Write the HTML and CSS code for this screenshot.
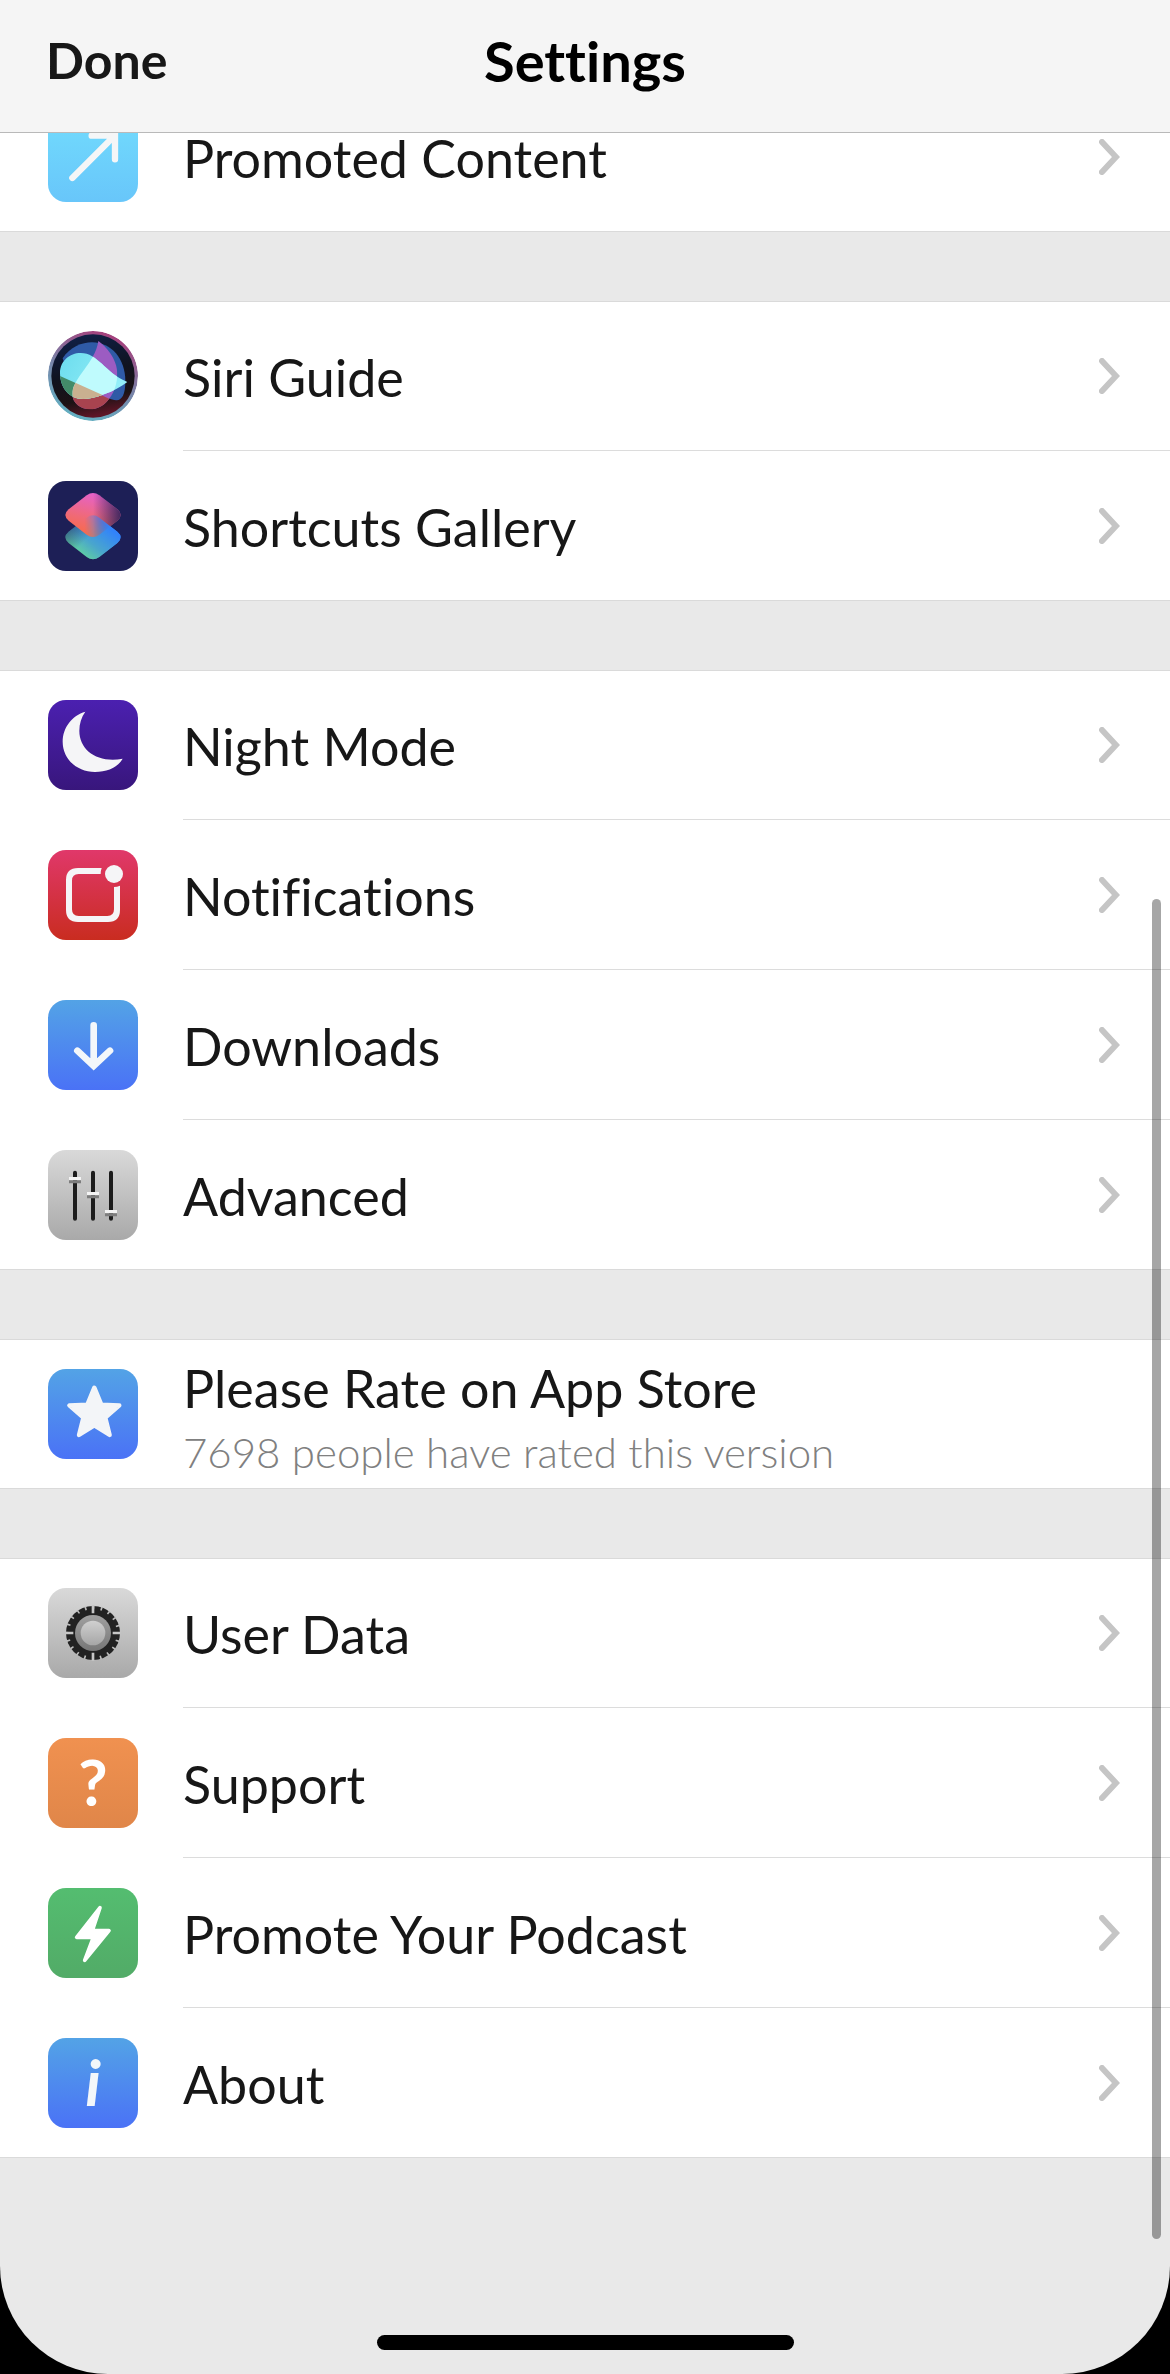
FILE: index.html
```html
<!DOCTYPE html>
<html lang="en">
<head>
    <meta charset="UTF-8">
    <meta name="viewport" content="width=device-width, initial-scale=1.0">
    <title>Settings</title>
    <link rel="stylesheet" href="styles.css">
</head>
<body>
    <!-- Shared chevron -->
    <svg class="defs" width="0" height="0" aria-hidden="true">
        <symbol id="chevron" viewBox="0 0 21 36">
            <path d="M3 3 L17 18 L3 33" fill="none" stroke="#c5c5c5" stroke-width="6" stroke-linecap="round"/>
        </symbol>
    </svg>

    <div class="screen">
        <header class="navbar">
            <button type="button" class="done">Done</button>
            <h1>Settings</h1>
        </header>

        <main class="settings">
            <ul class="group">
                <li><a class="row" href="#promoted">
                    <svg class="icon sky" viewBox="0 0 270 270"><path d="M73 198 L198 73 M131 71 H201 V142" fill="none" stroke="#f5f6f7" stroke-width="19" stroke-linecap="round"/></svg>
                    <span class="label">Promoted Content</span>
                    <svg class="chevron"><use href="#chevron"/></svg>
                </a></li>
            </ul>

            <ul class="group">
                <li><a class="row" href="#siri">
                    <svg class="icon round" viewBox="0 0 270 270">
                        <defs>
                            <linearGradient id="siriRim" x1="0.7" y1="0" x2="0.3" y2="1">
                                <stop offset="0" stop-color="#a83a78"/>
                                <stop offset="0.5" stop-color="#7a83a8"/>
                                <stop offset="1" stop-color="#62b3c4"/>
                            </linearGradient>
                            <linearGradient id="siriBack" x1="0.2" y1="0" x2="0.4" y2="1">
                                <stop offset="0" stop-color="#102048"/>
                                <stop offset="0.5" stop-color="#10131f"/>
                                <stop offset="0.8" stop-color="#1c1214"/>
                                <stop offset="1" stop-color="#5c1526"/>
                            </linearGradient>
                            <linearGradient id="siriCyan" x1="0" y1="0" x2="1" y2="0.6">
                                <stop offset="0" stop-color="#5fd6ea"/>
                                <stop offset="1" stop-color="#9df3fb"/>
                            </linearGradient>
                            <clipPath id="petalTall"><path d="M151 30 C142 96 73 140 73 190 C73 217 100 235 126 235 C175 235 208 180 208 128 C208 84 172 44 151 30 Z"/></clipPath>
                            <clipPath id="petalWide"><path d="M36 126 C36 90 65 66 98 66 C150 66 170 124 238 153 C200 182 140 204 105 204 C62 204 36 168 36 126 Z"/></clipPath>
                        </defs>
                        <circle cx="135" cy="135" r="135" fill="url(#siriRim)"/>
                        <circle cx="135" cy="135" r="125" fill="url(#siriBack)"/>
                        <path d="M44 82 C66 48 102 34 132 34 C190 34 232 84 232 150 C232 192 222 206 206 208 C180 210 60 150 44 82 Z" fill="#2f5aa6"/>
                        <g clip-path="url(#petalTall)">
                            <rect width="270" height="270" fill="#9c5cc2"/>
                            <path d="M36 134 L80 155 L190 206 L220 260 H36 Z" fill="#a8434f"/>
                        </g>
                        <g clip-path="url(#petalWide)">
                            <rect width="270" height="270" fill="url(#siriCyan)"/>
                            <path d="M30 132 L190 204 V230 H30 Z" fill="#438b69"/>
                            <g clip-path="url(#petalTall)">
                                <rect width="270" height="270" fill="#bffbfd"/>
                                <path d="M30 132 L190 204 V230 H30 Z" fill="#c9b090"/>
                            </g>
                        </g>
                    </svg>
                    <span class="label">Siri Guide</span>
                    <svg class="chevron"><use href="#chevron"/></svg>
                </a></li>
                <li><a class="row" href="#shortcuts">
                    <svg class="icon navy" viewBox="0 0 270 270">
                        <defs>
                            <linearGradient id="tileLow" x1="0.2" y1="0.9" x2="0.8" y2="0.3">
                                <stop offset="0" stop-color="#64d69a"/>
                                <stop offset="0.45" stop-color="#4aa6cd"/>
                                <stop offset="1" stop-color="#3283fa"/>
                            </linearGradient>
                            <linearGradient id="tileTop" x1="0.6" y1="0" x2="0.3" y2="1">
                                <stop offset="0" stop-color="#e561cf"/>
                                <stop offset="0.6" stop-color="#f06a74"/>
                                <stop offset="1" stop-color="#fa6a42"/>
                            </linearGradient>
                            <linearGradient id="fadeRight">
                                <stop offset="0.5" stop-color="#302158" stop-opacity="0"/>
                                <stop offset="1" stop-color="#302158" stop-opacity="0.9"/>
                            </linearGradient>
                            <linearGradient id="fadeLeft" x1="0" y1="0" x2="0.5" y2="0.4">
                                <stop offset="0" stop-color="#1f1f56" stop-opacity="0.8"/>
                                <stop offset="1" stop-color="#1f1f56" stop-opacity="0"/>
                            </linearGradient>
                            <linearGradient id="blend" gradientUnits="userSpaceOnUse" x1="110" y1="150" x2="185" y2="150">
                                <stop offset="0" stop-color="#000"/>
                                <stop offset="1" stop-color="#fff"/>
                            </linearGradient>
                            <mask id="rightHalf"><rect width="270" height="270" fill="url(#blend)"/></mask>
                            <path id="tile" d="M116 43 Q135 29 154 43 L208 85 Q228 102 208 119 L154 161 Q135 175 116 161 L62 119 Q42 102 62 85 Z"/>
                        </defs>
                        <use href="#tile" y="67" fill="url(#tileLow)"/>
                        <use href="#tile" y="67" fill="url(#fadeLeft)"/>
                        <use href="#tile" fill="url(#tileTop)"/>
                        <use href="#tile" fill="url(#fadeRight)"/>
                        <g mask="url(#rightHalf)"><use href="#tile" y="67" fill="url(#tileLow)"/></g>
                    </svg>
                    <span class="label">Shortcuts Gallery</span>
                    <svg class="chevron"><use href="#chevron"/></svg>
                </a></li>
            </ul>

            <ul class="group">
                <li><a class="row" href="#night">
                    <svg class="icon purple" viewBox="0 0 270 270"><path d="M112 35 C72 46 44 83 44 125 C44 176 86 216 141 216 C178 216 210 202 224 176 C150 190 94 152 94 92 C94 70 100 52 112 35 Z" fill="#f5f5f7"/></svg>
                    <span class="label">Night Mode</span>
                    <svg class="chevron"><use href="#chevron"/></svg>
                </a></li>
                <li><a class="row" href="#notifications">
                    <svg class="icon red" viewBox="0 0 270 270">
                        <path d="M161 54 H90 Q54 54 54 90 V180 Q54 216 90 216 H180 Q216 216 216 180 V107 Q207 111 198 111 V178 Q198 198 178 198 H92 Q72 198 72 178 V92 Q72 72 92 72 H158 Q158 62 161 54 Z" fill="#f5f5f7"/>
                        <circle cx="198" cy="72" r="27" fill="#f5f5f7"/>
                    </svg>
                    <span class="label">Notifications</span>
                    <svg class="chevron"><use href="#chevron"/></svg>
                </a></li>
                <li><a class="row" href="#downloads">
                    <svg class="icon blue" viewBox="0 0 270 270"><path d="M137 76 V194 M88 152 L137 198 L186 152" fill="none" stroke="#f3f7fa" stroke-width="20" stroke-linecap="round"/></svg>
                    <span class="label">Downloads</span>
                    <svg class="chevron"><use href="#chevron"/></svg>
                </a></li>
                <li><a class="row" href="#advanced">
                    <svg class="icon grey" viewBox="0 0 270 270">
                        <path d="M81 68 V206 M135 68 V206 M189 68 V206" stroke="#1c1c1c" stroke-width="12" stroke-linecap="round"/>
                        <path d="M63 86 H99 M117 131 H153 M171 185 H207" stroke="#f4f4f4" stroke-width="10"/>
                        <path d="M63 95 H99 M117 140 H153 M171 194 H207" stroke="#7d7d7d" stroke-width="9"/>
                    </svg>
                    <span class="label">Advanced</span>
                    <svg class="chevron"><use href="#chevron"/></svg>
                </a></li>
            </ul>

            <ul class="group">
                <li><a class="row" href="#rate">
                    <svg class="icon blue" viewBox="0 0 270 270"><path d="M139 56 L160 107 L214 109 L172 146 L185 198 L139 169 L93 198 L106 146 L64 109 L118 107 Z" fill="#f3f5f8" stroke="#f3f5f8" stroke-width="13" stroke-linejoin="round"/></svg>
                    <span class="label with-note">Please Rate on App Store<small>7698 people have rated this version</small></span>
                </a></li>
            </ul>

            <ul class="group">
                <li><a class="row" href="#data">
                    <svg class="icon grey" viewBox="0 0 270 270">
                        <defs>
                            <linearGradient id="knobRim" x1="0" y1="0" x2="0" y2="1">
                                <stop offset="0" stop-color="#a0a0a0"/>
                                <stop offset="1" stop-color="#777"/>
                            </linearGradient>
                            <linearGradient id="knob" x1="0" y1="0" x2="0" y2="1">
                                <stop offset="0" stop-color="#d0d0d0"/>
                                <stop offset="1" stop-color="#a6a6a6"/>
                            </linearGradient>
                        </defs>
                        <circle cx="135" cy="135" r="81" fill="#222"/>
                        <circle cx="135" cy="135" r="77" fill="none" stroke="#bcbcbc" stroke-width="11" pathLength="200" stroke-dasharray="2 8" stroke-dashoffset="1"/>
                        <path d="M135 52 V76 M135 194 V218 M52 135 H76 M194 135 H218" stroke="#c6c6c6" stroke-width="8"/>
                        <circle cx="135" cy="135" r="54" fill="url(#knobRim)"/>
                        <circle cx="135" cy="135" r="37" fill="url(#knob)"/>
                    </svg>
                    <span class="label">User Data</span>
                    <svg class="chevron"><use href="#chevron"/></svg>
                </a></li>
                <li><a class="row" href="#support">
                    <span class="icon orange question" aria-hidden="true">?</span>
                    <span class="label">Support</span>
                    <svg class="chevron"><use href="#chevron"/></svg>
                </a></li>
                <li><a class="row" href="#promote">
                    <svg class="icon green" viewBox="0 0 270 270"><path d="M156 59 L86 148 H136 L110 217 L183 128 H133 Z" fill="#fff" stroke="#fff" stroke-width="11" stroke-linejoin="round"/></svg>
                    <span class="label">Promote Your Podcast</span>
                    <svg class="chevron"><use href="#chevron"/></svg>
                </a></li>
                <li><a class="row" href="#about">
                    <span class="icon blue info" aria-hidden="true">i</span>
                    <span class="label">About</span>
                    <svg class="chevron"><use href="#chevron"/></svg>
                </a></li>
            </ul>
        </main>

        <div class="home-indicator"></div>
        <div class="scrollbar"></div>
    </div>
</body>
</html>
```

FILE: styles.css
```css
* {
    box-sizing: border-box;
}
body {
    margin: 0;
    background: #000;
    color: #171717;
    font-family: Lato, "Open Sans", sans-serif;
    font-size: 52px;
    font-variant-ligatures: none;
}
.defs {
    position: absolute;
}
.screen {
    position: relative;
    display: flex;
    flex-direction: column;
    min-height: 100vh;
    background: #e9e9e9;
    border-radius: 0 0 108px 108px;
    overflow: hidden;
}

.navbar {
    position: relative;
    z-index: 1;
    display: grid;
    grid-template-columns: 1fr auto 1fr;
    align-items: center;
    height: 133px;
    padding: 0 46px 12px;
    background: #f5f5f5;
    border-bottom: 1px solid #b9b9b9;
}
.navbar h1 {
    margin: 0;
    color: #000;
    font-size: 56px;
    font-weight: 700;
}
.done {
    justify-self: start;
    padding: 0;
    border: 0;
    background: none;
    color: #171717;
    font: inherit;
    font-size: 50px;
    font-weight: 700;
}

.settings {
    display: flex;
    flex-direction: column;
    gap: 69px;
    margin-top: -51px;
}
.group {
    margin: 0;
    padding: 0;
    list-style: none;
    background: linear-gradient(#dadada, #dadada) top / 100% 1px no-repeat, #fff;
    border-bottom: 1px solid #dadada;
}
.row {
    display: flex;
    align-items: center;
    height: 150px;
    padding-left: 48px;
    color: inherit;
    text-decoration: none;
    /* separator starts under the label */
    background: linear-gradient(#dcdcdc, #dcdcdc) 183px 100% / 100% 1px no-repeat;
}
li:last-child .row {
    height: 149px;
    padding-top: 1px;
    background: none;
}
.label {
    flex: 1;
    margin-left: 45px;
    padding-top: 2px;
    line-height: 64px;
}
.with-note {
    padding-top: 12px;
}
.label small {
    display: block;
    color: #808080;
    font-size: 42px;
    font-weight: 300;
}
.chevron {
    width: 21px;
    height: 36px;
    margin-right: 50px;
}

.icon {
    flex: none;
    width: 90px;
    height: 90px;
    border-radius: 18px;
}
.round { border-radius: 50%; }
.sky { background: linear-gradient(#72dcfd, #68c6fa); }
.navy { background: #1d1f56; }
.purple { background: linear-gradient(#4b20b0, #38167c); }
.red { background: linear-gradient(#e0386a, #c92c20); }
.blue { background: linear-gradient(#53a3e6, #4a72f6); }
.grey { background: linear-gradient(#d9d9d9, #a9a9a9); }
.orange { background: linear-gradient(#f09150, #e08649); }
.green { background: linear-gradient(#54bd70, #52ab67); }
.question,
.info {
    color: #fff;
    font-size: 64px;
    font-weight: 700;
    line-height: 88px;
    text-align: center;
}
.info {
    color: #f3f7fa;
    font-style: italic;
}

.home-indicator {
    width: 417px;
    height: 15px;
    margin: auto auto 24px;
    background: #000;
    border-radius: 8px;
}
.scrollbar {
    position: absolute;
    top: 899px;
    right: 9px;
    bottom: 135px;
    width: 9px;
    background: rgba(0, 0, 0, 0.35);
    border-radius: 5px;
}
```
